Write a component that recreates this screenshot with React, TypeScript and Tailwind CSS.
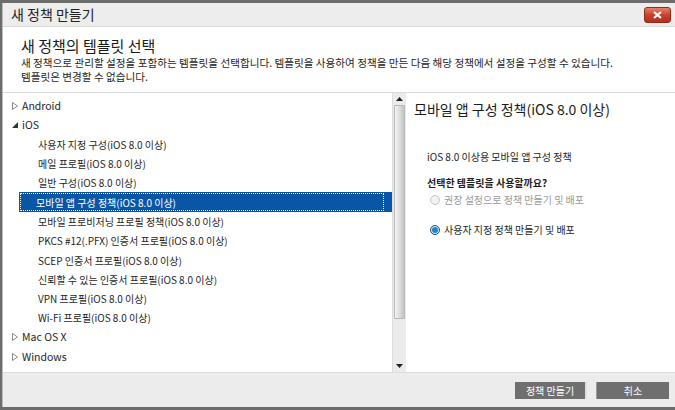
const font = { fontFamily: '"Noto Sans CJK KR", "Noto Sans", sans-serif' };

type Node = { label: string; level: 0 | 1; open?: boolean; selected?: boolean };

const nodes: Node[] = [
  { label: 'Android', level: 0 },
  { label: 'iOS', level: 0, open: true },
  { label: '사용자 지정 구성(iOS 8.0 이상)', level: 1 },
  { label: '메일 프로필(iOS 8.0 이상)', level: 1 },
  { label: '일반 구성(iOS 8.0 이상)', level: 1 },
  { label: '모바일 앱 구성 정책(iOS 8.0 이상)', level: 1, selected: true },
  { label: '모바일 프로비저닝 프로필 정책(iOS 8.0 이상)', level: 1 },
  { label: 'PKCS #12(.PFX) 인증서 프로필(iOS 8.0 이상)', level: 1 },
  { label: 'SCEP 인증서 프로필(iOS 8.0 이상)', level: 1 },
  { label: '신뢰할 수 있는 인증서 프로필(iOS 8.0 이상)', level: 1 },
  { label: 'VPN 프로필(iOS 8.0 이상)', level: 1 },
  { label: 'Wi-Fi 프로필(iOS 8.0 이상)', level: 1 },
  { label: 'Mac OS X', level: 0 },
  { label: 'Windows', level: 0 },
];

const Arrow = ({ open }: { open?: boolean }) =>
  open ? (
    <svg width="6" height="6" viewBox="0 0 6 6" className="mr-[4px]">
      <polygon points="6,0 6,6 0,6" fill="#333" />
    </svg>
  ) : (
    <svg width="6" height="8" viewBox="0 0 6 8" className="mr-[4px]">
      <polygon points="0.5,0.5 5.5,4 0.5,7.5" fill="none" stroke="#8a8a8a" strokeWidth="1" />
    </svg>
  );

const TreeRow = ({ node }: { node: Node }) => {
  if (node.level === 0) {
    return (
      <div className="h-[19.3px] flex items-center pl-[9px] text-[10.5px] text-[#1e1e1e]">
        <Arrow open={node.open} />
        <span>{node.label}</span>
      </div>
    );
  }
  if (node.selected) {
    return (
      <div className="h-[19.3px] ml-[16px] flex bg-[#0a56a6] py-[1px] pl-[1px] pr-[8px]">
        <div className="flex-1 flex items-center pl-[15px] border border-dotted border-white text-[10px] text-white">
          {node.label}
        </div>
      </div>
    );
  }
  return (
    <div className="h-[19.3px] flex items-center pl-[35px] text-[10px] text-[#1e1e1e]">{node.label}</div>
  );
};

const Scrollbar = () => (
  <div className="w-[14px] bg-[#ebebeb] flex flex-col border-l border-[#dcdcdc]">
    <div className="h-[12px] flex items-center justify-center">
      <svg width="7" height="4" viewBox="0 0 7 4">
        <polygon points="3.5,0 7,4 0,4" fill="#222" />
      </svg>
    </div>
    <div className="h-[214px] mx-[1px] rounded-[1px] border border-[#b8b8b8] bg-gradient-to-r from-[#f4f4f4] via-[#dedede] to-[#c4c4c4]" />
    <div className="flex-1" />
    <div className="h-[12px] flex items-center justify-center">
      <svg width="7" height="4" viewBox="0 0 7 4">
        <polygon points="0,0 7,0 3.5,4" fill="#222" />
      </svg>
    </div>
  </div>
);

const Radio = ({ checked, disabled, label }: { checked?: boolean; disabled?: boolean; label: string }) => (
  <div className="flex items-center gap-[4px]">
    {checked ? (
      <div className="w-[10px] h-[10px] rounded-full border border-[#2c4a66] bg-[#d8e6f2] flex items-center justify-center">
        <div className="w-[6px] h-[6px] rounded-full bg-[#1d86d4]" />
      </div>
    ) : (
      <div className="w-[10px] h-[10px] rounded-full border border-[#c8c8c8] bg-[#f2f2f2]" />
    )}
    <span className={`text-[10px] ${disabled ? 'text-[#9a9a9a]' : 'text-[#1e1e1e]'}`}>{label}</span>
  </div>
);

export default function App() {
  return (
    <div style={font} className="w-[675px] h-[410px] bg-[#6c6c6c] pt-[3px] pl-[2px] pb-[3px] overflow-hidden">
      <div className="h-full bg-white flex flex-col border-l border-[#bcbcbc]">
        <div className="h-[24px] shrink-0 bg-[#ededed] border-b border-[#d8d8d8] flex items-center justify-between pl-[8px] pr-[4px]">
          <span className="text-[14px] text-[#222]">새 정책 만들기</span>
          <div className="w-[27px] h-[16px] rounded-[3px] border border-[#8e2a1e] bg-gradient-to-b from-[#e5806a] via-[#c8412a] to-[#b3301c] flex items-center justify-center">
            <svg width="9" height="8" viewBox="0 0 9 8">
              <path d="M1 1 L8 7 M8 1 L1 7" stroke="white" strokeWidth="2.2" />
            </svg>
          </div>
        </div>
        <div className="h-[66px] shrink-0 border-b border-[#dadada] pl-[18px] pt-[8px]">
          <div className="text-[15px] leading-[21px] text-[#1a1a1a]">새 정책의 템플릿 선택</div>
          <div className="text-[10.6px] leading-[13.5px] text-[#1e1e1e] whitespace-nowrap">
            새 정책으로 관리할 설정을 포함하는 템플릿을 선택합니다. 템플릿을 사용하여 정책을 만든 다음 해당 정책에서 설정을 구성할 수 있습니다.
          </div>
          <div className="text-[10.6px] leading-[13.5px] text-[#1e1e1e]">템플릿은 변경할 수 없습니다.</div>
        </div>
        <div className="flex-1 flex min-h-0">
          <div className="w-[389px] pt-[3px]">
            {nodes.map((n) => (
              <TreeRow key={n.label} node={n} />
            ))}
          </div>
          <Scrollbar />
          <div className="flex-1 pl-[8px] pt-[5px]">
            <div className="text-[14px] leading-[22px] text-[#1a1a1a]">모바일 앱 구성 정책(iOS 8.0 이상)</div>
            <div className="pl-[13px] pt-[30px]">
              <div className="text-[10px] leading-[14px] text-[#1e1e1e]">iOS 8.0 이상용 모바일 앱 구성 정책</div>
              <div className="text-[10px] leading-[14px] font-bold text-[#1e1e1e] mt-[12px]">선택한 템플릿을 사용할까요?</div>
              <div className="pl-[3px] mt-[2px] flex flex-col gap-[15px]">
                <Radio disabled label="권장 설정으로 정책 만들기 및 배포" />
                <Radio checked label="사용자 지정 정책 만들기 및 배포" />
              </div>
            </div>
          </div>
        </div>
        <div className="h-[35px] shrink-0 bg-[#ececed] border-t border-[#dcdcdc] flex items-center justify-end gap-[9px] pr-[6px]">
          <div className="w-[72px] h-[17px] bg-[#6f6f6f] border-r-2 border-[#e0e0e0] flex items-center justify-center text-[10px] text-white">
            정책 만들기
          </div>
          <div className="w-[73px] h-[17px] bg-[#6f6f6f] border-l border-[#9a9a9a] flex items-center justify-center text-[10px] text-white">
            취소
          </div>
        </div>
      </div>
    </div>
  );
}
